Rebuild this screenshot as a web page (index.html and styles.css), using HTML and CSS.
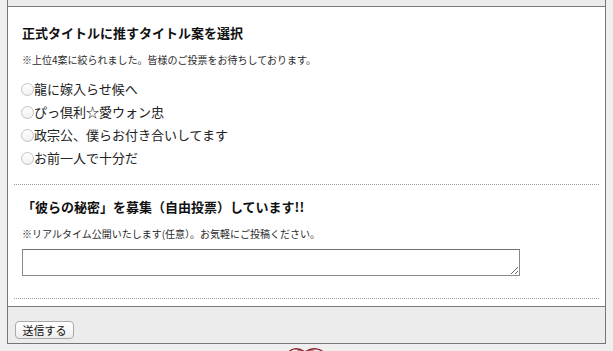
FILE: index.html
```html
<!DOCTYPE html>
<html lang="ja">
<head>
<meta charset="utf-8">
<link rel="stylesheet" href="styles.css">
</head>
<body>
<div class="frame">
  <div class="main">
    <section class="sec sec-vote">
      <h2 class="title">正式タイトルに推すタイトル案を選択</h2>
      <p class="note">※上位4案に絞られました。皆様のご投票をお待ちしております。</p>
      <ul class="options">
        <li><label><input type="radio" name="t" class="radio">龍に嫁入らせ候へ</label></li>
        <li><label><input type="radio" name="t" class="radio">ぴっ倶利☆愛ウォン忠</label></li>
        <li><label><input type="radio" name="t" class="radio">政宗公、僕らお付き合いしてます</label></li>
        <li><label><input type="radio" name="t" class="radio">お前一人で十分だ</label></li>
      </ul>
    </section>
    <section class="sec sec-free">
      <h2 class="title">「彼らの秘密」を募集（自由投票）しています!!</h2>
      <p class="note">※リアルタイム公開いたします(任意）。お気軽にご投稿ください。</p>
      <textarea class="box"></textarea>
    </section>
  </div>
  <div class="foot">
    <button class="send" type="button">送信する</button>
  </div>
</div>
<div class="deco">
  <svg width="44" height="8" viewBox="0 0 44 8">
    <path d="M3 8 C5 2 13 1 20 6 C27 1 36 2 40 8" fill="none" stroke="#8a1c25" stroke-width="1.4"/>
    <path d="M9 8 C11 4 16 4 20 7 C24 4 30 4 33 8" fill="none" stroke="#b0303a" stroke-width="1"/>
  </svg>
</div>
</body>
</html>
```

FILE: styles.css
```css
html, body {
  margin: 0;
  padding: 0;
}
body {
  background: #efefef;
  font-family: "Noto Sans CJK JP", "DejaVu Sans", sans-serif;
  color: #111;
  width: 613px;
  height: 351px;
  overflow: hidden;
}
.frame {
  margin-left: 7px;
  width: 597px;
  border: 1px solid #767676;
  border-top: none;
  padding-top: 6px;
  background: #ececec;
}
.main {
  background: #fff;
  border-top: 1px solid #7a7a7a;
  border-bottom: 1px solid #7a7a7a;
  padding: 0 6px 7px;
}
.sec {
  border-bottom: 1px dotted #9a9a9a;
  padding-left: 8px;
}
.sec-vote {
  padding-top: 16px;
  padding-bottom: 15px;
}
.sec-free {
  padding-top: 12px;
  padding-bottom: 22px;
}
.title {
  margin: 0;
  font-size: 13px;
  line-height: 20px;
  font-weight: bold;
  color: #111;
}
.note {
  margin: 10px 0 0;
  font-size: 10px;
  line-height: 14px;
  color: #2a2a2a;
}
.options {
  list-style: none;
  margin: 10px 0 0;
  padding: 0;
}
.options li {
  height: 23px;
  display: flex;
  align-items: center;
  font-size: 13px;
  color: #222;
}
.options label {
  display: flex;
  align-items: center;
}
.radio {
  appearance: none;
  -webkit-appearance: none;
  width: 13px;
  height: 13px;
  margin: 1px 0 0 -1px;
  border-radius: 50%;
  border: 1px solid #c2c2c2;
  background: linear-gradient(#ffffff, #f0f0f0);
  box-sizing: border-box;
}
.box {
  display: block;
  margin-top: 8px;
  width: 498px;
  height: 27px;
  box-sizing: border-box;
  border: 1px solid #8a8a8a;
  border-top-color: #707070;
  padding: 2px;
  resize: both;
  background: #fff;
}
.foot {
  height: 36px;
  padding: 9px 0 0 7px;
  box-sizing: border-box;
}
.send {
  height: 18px;
  width: 59px;
  padding: 0;
  font-family: "Noto Sans CJK JP", sans-serif;
  font-size: 11px;
  line-height: 16px;
  color: #111;
  border: 1px solid #a9a9a9;
  border-radius: 4px;
  background: linear-gradient(#ffffff, #ededed);
}
.deco {
  display: flex;
  justify-content: center;
  padding: 2px 0 0 12px;
  height: 8px;
  width: 590px;
}
.deco svg {
  display: block;
}
```
